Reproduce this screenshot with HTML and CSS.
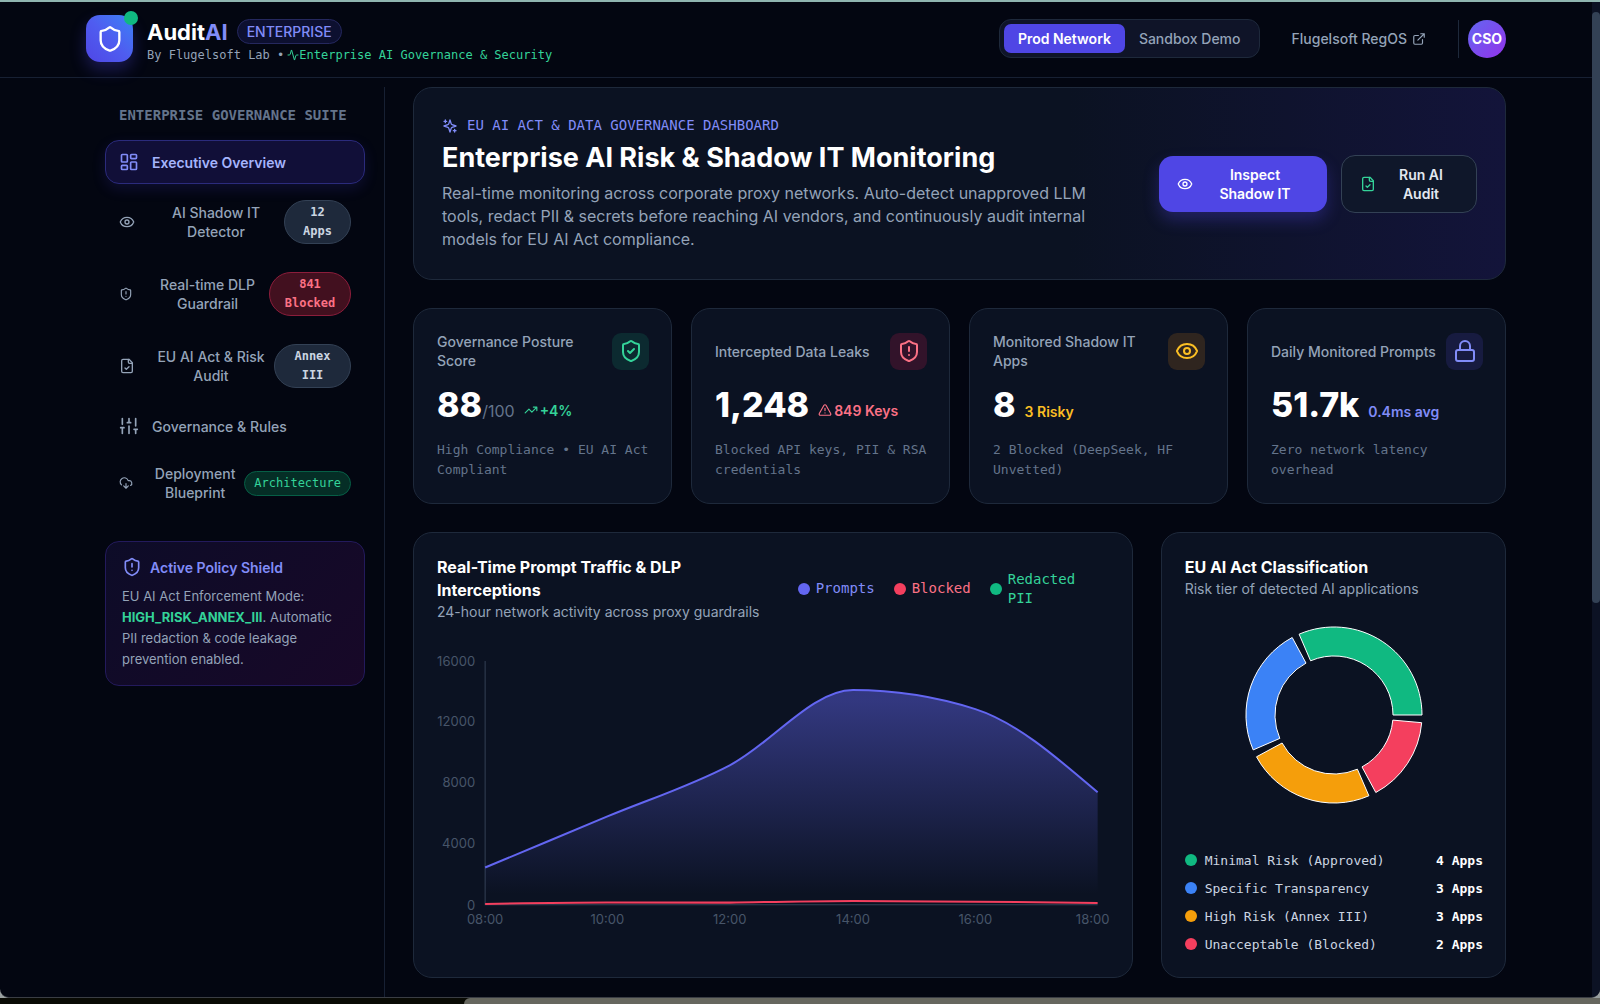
FILE: index.html
```html
<!DOCTYPE html>
<html lang="en">
<head>
<meta charset="utf-8">
<meta name="viewport" content="width=device-width, initial-scale=1">
<title>AuditAI Enterprise</title>
<link rel="stylesheet" href="styles.css">
</head>
<body>
<svg class="sprite" aria-hidden="true">
  <symbol id="shield" viewBox="0 0 24 24"><path d="M20 13c0 5-3.5 7.5-7.66 8.95a1 1 0 0 1-.67-.01C7.5 20.5 4 18 4 13V6a1 1 0 0 1 1-1c2 0 4.5-1.2 6.24-2.72a1.17 1.17 0 0 1 1.52 0C14.51 3.81 17 5 19 5a1 1 0 0 1 1 1z"/></symbol>
  <symbol id="shield-alert" viewBox="0 0 24 24"><path d="M20 13c0 5-3.5 7.5-7.66 8.95a1 1 0 0 1-.67-.01C7.5 20.5 4 18 4 13V6a1 1 0 0 1 1-1c2 0 4.5-1.2 6.24-2.72a1.17 1.17 0 0 1 1.52 0C14.51 3.81 17 5 19 5a1 1 0 0 1 1 1z"/><path d="M12 8v4M12 16h.01"/></symbol>
  <symbol id="shield-check" viewBox="0 0 24 24"><path d="M20 13c0 5-3.5 7.5-7.66 8.95a1 1 0 0 1-.67-.01C7.5 20.5 4 18 4 13V6a1 1 0 0 1 1-1c2 0 4.5-1.2 6.24-2.72a1.17 1.17 0 0 1 1.52 0C14.51 3.81 17 5 19 5a1 1 0 0 1 1 1z"/><path d="m9 12 2 2 4-4"/></symbol>
  <symbol id="activity" viewBox="0 0 24 24"><path d="M22 12h-2.48a2 2 0 0 0-1.93 1.46l-2.35 8.36a.25.25 0 0 1-.48 0L9.24 2.18a.25.25 0 0 0-.48 0l-2.35 8.36A2 2 0 0 1 4.49 12H2"/></symbol>
  <symbol id="external" viewBox="0 0 24 24"><path d="M15 3h6v6M10 14 21 3M18 13v6a2 2 0 0 1-2 2H5a2 2 0 0 1-2-2V8a2 2 0 0 1 2-2h6"/></symbol>
  <symbol id="dashboard" viewBox="0 0 24 24"><rect width="7" height="9" x="3" y="3" rx="1"/><rect width="7" height="5" x="14" y="3" rx="1"/><rect width="7" height="9" x="14" y="12" rx="1"/><rect width="7" height="5" x="3" y="16" rx="1"/></symbol>
  <symbol id="eye" viewBox="0 0 24 24"><path d="M2.062 12.348a1 1 0 0 1 0-.696 10.75 10.75 0 0 1 19.876 0 1 1 0 0 1 0 .696 10.75 10.75 0 0 1-19.876 0"/><circle cx="12" cy="12" r="3"/></symbol>
  <symbol id="file-check" viewBox="0 0 24 24"><path d="M15 2H6a2 2 0 0 0-2 2v16a2 2 0 0 0 2 2h12a2 2 0 0 0 2-2V7Z"/><path d="M14 2v4a2 2 0 0 0 2 2h4M9 15l2 2 4-4"/></symbol>
  <symbol id="sliders" viewBox="0 0 24 24"><path d="M4 21v-7M4 10V3M12 21v-9M12 8V3M20 21v-5M20 12V3M2 14h4M10 8h4M18 16h4"/></symbol>
  <symbol id="cloud" viewBox="0 0 24 24"><path d="M12 13v8l-4-4M12 21l4-4M4.393 15.269A7 7 0 1 1 15.71 8h1.79a4.5 4.5 0 0 1 2.436 8.284"/></symbol>
  <symbol id="sparkles" viewBox="0 0 24 24"><path d="m12 3-1.912 5.813a2 2 0 0 1-1.275 1.275L3 12l5.813 1.912a2 2 0 0 1 1.275 1.275L12 21l1.912-5.813a2 2 0 0 1 1.275-1.275L21 12l-5.813-1.912a2 2 0 0 1-1.275-1.275L12 3ZM5 3v4M19 17v4M3 5h4M17 19h4"/></symbol>
  <symbol id="trend" viewBox="0 0 24 24"><path d="m22 7-8.500 8.500-5-5L2 17M16 7h6v6"/></symbol>
  <symbol id="alert" viewBox="0 0 24 24"><path d="m21.730 18-8-14a2 2 0 0 0-3.480 0l-8 14A2 2 0 0 0 4 21h16a2 2 0 0 0 1.730-3M12 9v4M12 17h.01"/></symbol>
  <symbol id="lock" viewBox="0 0 24 24"><rect width="18" height="11" x="3" y="11" rx="2"/><path d="M7 11V7a5 5 0 0 1 10 0v4"/></symbol>
</svg>

<div class="window">
  <div class="page">
    <header class="topbar">
      <div class="topbar-inner">
        <div class="brand">
          <div class="logo"><svg class="icon icon-28"><use href="#shield"/></svg><span class="logo-dot"></span></div>
          <div class="brand-text">
            <div class="brand-row"><span class="brand-name">Audit<span class="brand-ai">AI</span></span><span class="brand-badge">ENTERPRISE</span></div>
            <p class="brand-sub"><span>By Flugelsoft Lab •</span><span class="brand-tag"><svg class="icon icon-12"><use href="#activity"/></svg>Enterprise AI Governance &amp; Security</span></p>
          </div>
        </div>
        <div class="top-actions">
          <div class="toggle">
            <button class="toggle-btn toggle-on" type="button">Prod Network</button>
            <button class="toggle-btn" type="button">Sandbox Demo</button>
          </div>
          <a class="top-link" href="#">Flugelsoft RegOS <svg class="icon icon-14"><use href="#external"/></svg></a>
          <div class="user"><div class="avatar">CSO</div></div>
        </div>
      </div>
    </header>

    <div class="shell">
      <aside class="sidebar">
        <h2 class="side-title">ENTERPRISE GOVERNANCE SUITE</h2>
        <nav class="side-nav">
          <button class="nav-item nav-active" type="button"><svg class="icon icon-20"><use href="#dashboard"/></svg><span class="nav-text nav-left">Executive Overview</span></button>
          <button class="nav-item" type="button"><svg class="icon icon-16"><use href="#eye"/></svg><span class="nav-text">AI Shadow IT Detector</span><span class="pill">12<br>Apps</span></button>
          <button class="nav-item" type="button"><svg class="icon icon-14"><use href="#shield-alert"/></svg><span class="nav-text">Real-time DLP Guardrail</span><span class="pill pill-red">841<br>Blocked</span></button>
          <button class="nav-item" type="button"><svg class="icon icon-16"><use href="#file-check"/></svg><span class="nav-text">EU AI Act &amp; Risk Audit</span><span class="pill pill-wide">Annex<br>III</span></button>
          <button class="nav-item" type="button"><svg class="icon icon-20"><use href="#sliders"/></svg><span class="nav-text nav-left">Governance &amp; Rules</span></button>
          <button class="nav-item" type="button"><svg class="icon icon-14"><use href="#cloud"/></svg><span class="nav-text">Deployment Blueprint</span><span class="pill pill-green">Architecture</span></button>
        </nav>
        <section class="policy">
          <h3 class="policy-title"><svg class="icon icon-20"><use href="#shield-alert"/></svg>Active Policy Shield</h3>
          <p class="policy-text">EU AI Act Enforcement Mode: <strong class="policy-mode">HIGH_RISK_ANNEX_III</strong>. Automatic PII redaction &amp; code leakage prevention enabled.</p>
        </section>
      </aside>

      <main class="main">
        <section class="hero">
          <div class="hero-copy">
            <p class="hero-label"><svg class="icon icon-16"><use href="#sparkles"/></svg>EU AI ACT &amp; DATA GOVERNANCE DASHBOARD</p>
            <h1 class="hero-title">Enterprise AI Risk &amp; Shadow IT Monitoring</h1>
            <p class="hero-text">Real-time monitoring across corporate proxy networks. Auto-detect unapproved LLM tools, redact PII &amp; secrets before reaching AI vendors, and continuously audit internal models for EU AI Act compliance.</p>
          </div>
          <div class="hero-actions">
            <button class="btn btn-primary" type="button"><svg class="icon icon-16"><use href="#eye"/></svg><span class="btn-text">Inspect<br>Shadow IT</span></button>
            <button class="btn btn-dark" type="button"><svg class="icon icon-16 green"><use href="#file-check"/></svg><span class="btn-text">Run AI<br>Audit</span></button>
          </div>
        </section>

        <section class="stats">
          <article class="card">
            <div class="stat-head"><h3 class="stat-label">Governance Posture Score</h3><span class="tile tile-green"><svg class="icon icon-24"><use href="#shield-check"/></svg></span></div>
            <div class="stat-row"><div class="stat-value">88<span class="stat-unit">/100</span></div><span class="stat-note green"><svg class="icon icon-14"><use href="#trend"/></svg>+4%</span></div>
            <p class="stat-caption">High Compliance • EU AI Act Compliant</p>
          </article>
          <article class="card">
            <div class="stat-head"><h3 class="stat-label">Intercepted Data Leaks</h3><span class="tile tile-red"><svg class="icon icon-24"><use href="#shield-alert"/></svg></span></div>
            <div class="stat-row"><div class="stat-value">1,248</div><span class="stat-note red"><svg class="icon icon-14"><use href="#alert"/></svg>849 Keys</span></div>
            <p class="stat-caption">Blocked API keys, PII &amp; RSA credentials</p>
          </article>
          <article class="card">
            <div class="stat-head"><h3 class="stat-label">Monitored Shadow IT Apps</h3><span class="tile tile-amber"><svg class="icon icon-24"><use href="#eye"/></svg></span></div>
            <div class="stat-row"><div class="stat-value">8</div><span class="stat-note amber">3 Risky</span></div>
            <p class="stat-caption">2 Blocked (DeepSeek, HF Unvetted)</p>
          </article>
          <article class="card">
            <div class="stat-head"><h3 class="stat-label">Daily Monitored Prompts</h3><span class="tile tile-indigo"><svg class="icon icon-24"><use href="#lock"/></svg></span></div>
            <div class="stat-row"><div class="stat-value">51.7k</div><span class="stat-note indigo">0.4ms avg</span></div>
            <p class="stat-caption">Zero network latency overhead</p>
          </article>
        </section>

        <section class="charts">
          <article class="card traffic">
            <div class="chart-head">
              <div>
                <h3 class="card-title">Real-Time Prompt Traffic &amp; DLP Interceptions</h3>
                <p class="card-sub">24-hour network activity across proxy guardrails</p>
              </div>
              <ul class="legend">
                <li class="legend-item indigo"><span class="dot dot-indigo"></span>Prompts</li>
                <li class="legend-item red"><span class="dot dot-red"></span>Blocked</li>
                <li class="legend-item green"><span class="dot dot-green"></span><span>Redacted<br>PII</span></li>
              </ul>
            </div>
            <svg class="area-chart" viewBox="0 0 671 304" role="img" aria-label="Prompt traffic by hour">
              <defs><linearGradient id="fill" x1="0" y1="0" x2="0" y2="1"><stop offset="5%" stop-color="#6366f1" stop-opacity=".45"/><stop offset="95%" stop-color="#6366f1" stop-opacity="0"/></linearGradient></defs>
              <path class="axis" d="M48 12V255H659"/>
              <path fill="url(#fill)" d="M48 218C89 201 129 184 170 167S252 137 292 116C333 95 374 41 415 41C455 41 496 47 537 60C578 73 618 108 659 143V255H48Z"/>
              <path class="line line-indigo" d="M48 218C89 201 129 184 170 167S252 137 292 116C333 95 374 41 415 41C455 41 496 47 537 60C578 73 618 108 659 143"/>
              <path class="line line-red" d="M48 254.300C89 253.500 129 252.800 170 252.800S252 253.200 292 253C333 252.500 374 251.300 415 251.300S618 252.600 659 253.300"/>
              <g class="tick tick-y"><text x="38" y="17">16000</text><text x="38" y="77">12000</text><text x="38" y="138">8000</text><text x="38" y="199">4000</text><text x="38" y="260">0</text></g>
              <g class="tick tick-x"><text x="48" y="274">08:00</text><text x="170" y="274">10:00</text><text x="292" y="274">12:00</text><text x="415" y="274">14:00</text><text x="537" y="274">16:00</text><text x="654" y="274">18:00</text></g>
            </svg>
          </article>

          <article class="card classes">
            <h3 class="card-title">EU AI Act Classification</h3>
            <p class="card-sub">Risk tier of detected AI applications</p>
            <div class="donut-wrap">
              <svg class="donut" viewBox="-89 -89 178 178" role="img" aria-label="Risk tiers">
                <path fill="#10b981" d="M88 0A88 88 0 0 0-34.900-80.800L-23.400-54.200A59 59 0 0 1 59 0Z"/>
                <path fill="#3b82f6" d="M-41.800-77.500A88 88 0 0 0-80.800 34.900L-54.200 23.400A59 59 0 0 1-28-51.900Z"/>
                <path fill="#f59e0b" d="M-77.500 41.800A88 88 0 0 0 34.900 80.800L23.400 54.200A59 59 0 0 1-51.900 28Z"/>
                <path fill="#f43f5e" d="M41.800 77.500A88 88 0 0 0 87.700 7.700L58.800 5.100A59 59 0 0 1 28 51.900Z"/>
              </svg>
            </div>
            <ul class="tiers">
              <li class="tier"><span class="dot dot-green"></span>Minimal Risk (Approved)<strong class="tier-count">4 Apps</strong></li>
              <li class="tier"><span class="dot dot-blue"></span>Specific Transparency<strong class="tier-count">3 Apps</strong></li>
              <li class="tier"><span class="dot dot-amber"></span>High Risk (Annex III)<strong class="tier-count">3 Apps</strong></li>
              <li class="tier"><span class="dot dot-red"></span>Unacceptable (Blocked)<strong class="tier-count">2 Apps</strong></li>
            </ul>
          </article>
        </section>
      </main>
    </div>
  </div>
  <div class="scrollbar"><div class="scroll-thumb"></div></div>
</div>
<div class="desktop"><div class="dock"></div></div>
</body>
</html>
```
FILE: styles.css
```css
* { box-sizing: border-box; margin: 0; padding: 0; }

body {
  display: flex;
  flex-direction: column;
  height: 100vh;
  overflow: hidden;
  background: #9aa0a0;
  color: #fff;
  font-family: Inter, "Liberation Sans", sans-serif;
  font-size: 14px;
  line-height: 19px;
}

button { font: inherit; color: inherit; background: none; border: 0; cursor: pointer; }
a { color: inherit; text-decoration: none; }
ul { list-style: none; }

.sprite { display: none; }
.icon { flex: none; fill: none; stroke: currentColor; stroke-width: 2; stroke-linecap: round; stroke-linejoin: round; }
.icon-12 { width: 12px; height: 12px; }
.icon-14 { width: 14px; height: 14px; }
.icon-16 { width: 16px; height: 16px; }
.icon-20 { width: 20px; height: 20px; }
.icon-24 { width: 24px; height: 24px; }
.icon-28 { width: 28px; height: 28px; }

.green { color: #34d399; }
.red { color: #fb7185; }
.amber { color: #fbbf24; }
.indigo { color: #818cf8; }

.window {
  flex: 1;
  min-height: 0;
  display: flex;
  overflow: hidden;
  border-top: 2px solid #8fb5b0;
  border-bottom: 1px solid #3a3d44;
  border-radius: 0 0 9px 9px;
  background: #030611;
}
.page { flex: 1; min-width: 0; }
.scrollbar { width: 8px; padding-top: 10px; background: #0c1224; }
.scroll-thumb { height: 60%; border-radius: 4px; background: #334155; }

.desktop { height: 6px; padding-left: 29%; background: #090a04; }
.dock { height: 6px; border-radius: 9px 0 0 0; background: #66675f; }

/* Top bar */
.topbar { border-bottom: 1px solid #172033; }
.topbar-inner {
  display: flex;
  align-items: center;
  justify-content: space-between;
  max-width: 1420px;
  height: 75px;
  margin: 0 auto;
  padding-bottom: 2px;
}
.brand { display: flex; align-items: center; gap: 14px; }
.brand-text { padding-top: 5px; }
.logo {
  position: relative;
  display: grid;
  place-items: center;
  width: 47px;
  height: 47px;
  border-radius: 14px;
  background: linear-gradient(45deg, #4f46e5, #4f5df0 50%, #3b82f6);
  box-shadow: 0 8px 16px rgba(79, 70, 229, .3);
}
.logo-dot { position: absolute; top: -4px; right: -5px; width: 14px; height: 14px; border-radius: 50%; background: #10b981; }
.brand-row { display: flex; align-items: center; gap: 9px; }
.brand-name { font-size: 22px; line-height: 28px; font-weight: 700; }
.brand-ai { color: #818cf8; }
.brand-badge {
  padding: 2px 9px;
  border: 1px solid #25285e;
  border-radius: 14px;
  background: #0d1030;
  color: #818cf8;
  font-weight: 500;
}
.brand-sub, .hero-label, .side-title, .pill, .stat-caption, .legend, .tiers {
  font-family: "DejaVu Sans Mono", "Liberation Mono", monospace;
}
.brand-sub { display: flex; align-items: center; gap: 3px; color: #94a3b8; font-size: 12px; }
.brand-tag { display: flex; align-items: center; color: #34d399; }

.top-actions { display: flex; align-items: center; font-weight: 500; color: #94a3b8; }
.toggle { display: flex; padding: 4px; border: 1px solid #1e293b; border-radius: 12px; background: #0f1428; }
.toggle-btn { padding: 5px 14px; border-radius: 7px; }
.toggle-on { background: #4f46e5; color: #fff; font-weight: 600; }
.top-link { display: flex; align-items: center; gap: 5px; margin: 0 32px; }
.user { padding-left: 9px; border-left: 1px solid #1e293b; }
.avatar {
  display: grid;
  place-items: center;
  width: 38px;
  height: 38px;
  border-radius: 50%;
  background: linear-gradient(135deg, #6366f1, #9333ea);
  color: #fff;
  font-weight: 700;
}

/* Layout below the top bar */
.shell { display: flex; max-width: 1420px; margin: 0 auto; padding-top: 9px; }
.sidebar { flex: none; width: 299px; min-height: 100vh; padding: 19px 19px 0; border-right: 1px solid #172033; }
.main { flex: 1; min-width: 0; padding-left: 28px; }

.side-title { padding: 0 14px; color: #64748b; font-size: 14px; font-weight: 700; white-space: nowrap; }
.side-nav { display: flex; flex-direction: column; gap: 4px; margin: 15px 0 27px; }
.nav-item {
  display: flex;
  align-items: center;
  min-height: 44px;
  padding: 11px 13px;
  border: 1px solid transparent;
  border-radius: 14px;
  color: #94a3b8;
  font-weight: 500;
}
.nav-text { flex: 1; padding-left: 13px; }
.nav-left { text-align: left; }
.nav-active { border-color: #2b2b7c; background: #110f38; color: #a5b4fc; font-weight: 600; box-shadow: 0 5px 14px rgba(79, 70, 229, .15); }
.nav-active .icon { color: #818cf8; }
.pill {
  flex: none;
  min-width: 67px;
  padding: 2px 10px;
  border: 1px solid #334155;
  border-radius: 24px;
  background: #1e293b;
  color: #cbd5e1;
  font-size: 12px;
  font-weight: 700;
}
.pill-wide { min-width: 77px; }
.pill-red { min-width: 82px; border-color: #8c1d3b; background: #42101f; color: #fb7185; }
.pill-green { border-color: #065f46; background: #052e26; color: #34d399; font-weight: 400; padding: 2px 9px; }

.policy { padding: 15px 16px; border: 1px solid #231a5c; border-radius: 14px; background: linear-gradient(135deg, #0d0c28, #180828); }
.policy-title { display: flex; align-items: center; gap: 8px; color: #818cf8; font-size: 14px; font-weight: 600; }
.policy-text { margin-top: 9px; color: #94a3b8; font-size: 13px; line-height: 21px; }
.policy-mode { color: #34d399; font-weight: 700; }

/* Hero */
.hero {
  display: flex;
  align-items: center;
  justify-content: space-between;
  padding: 28px;
  border: 1px solid #1e293b;
  border-radius: 19px;
  background: linear-gradient(90deg, #0b1222 60%, #13143a);
}
.hero-copy { max-width: 670px; }
.hero-label { display: flex; align-items: center; gap: 9px; color: #818cf8; }
.hero-title { margin: 5px 0 6px; font-size: 27px; line-height: 36px; font-weight: 700; white-space: nowrap; }
.hero-text { color: #94a3b8; font-size: 16px; line-height: 23px; }
.hero-actions { display: flex; align-items: center; gap: 14px; }
.btn { display: flex; align-items: center; gap: 8px; padding: 9px 18px; border-radius: 14px; font-weight: 600; }
.btn-text { flex: 1; }
.btn-primary { width: 168px; background: #4f46e5; box-shadow: 0 8px 16px rgba(79, 70, 229, .3); }
.btn-dark { width: 136px; border: 1px solid #334155; background: #0f172a; color: #e2e8f0; }

/* Stat cards */
.stats { display: grid; grid-template-columns: repeat(4, 1fr); gap: 19px; margin: 28px 0; }
.card { padding: 23px 22px 23px 23px; border: 1px solid #1e293b; border-radius: 19px; background: #0b1222; }
.stat-head { display: flex; align-items: center; justify-content: space-between; min-height: 38px; }
.stat-label { color: #94a3b8; font-size: 14px; font-weight: 500; }
.tile { flex: none; display: grid; place-items: center; width: 37px; height: 37px; border-radius: 9px; }
.tile-green { background: #0c2a30; color: #34d399; }
.tile-red { background: #32132a; color: #fb7185; }
.tile-amber { background: #2f251f; color: #fbbf24; }
.tile-indigo { background: #171b40; color: #818cf8; }
.stat-row { display: flex; align-items: baseline; gap: 9px; margin: 14px 0; }
.stat-value { font-size: 34px; line-height: 42px; font-weight: 800; }
.stat-unit { color: #64748b; font-size: 16px; line-height: 16px; font-weight: 400; }
.stat-note { display: flex; align-items: center; gap: 2px; font-weight: 600; }
.stat-caption { color: #64748b; font-size: 13px; line-height: 20px; }

/* Charts */
.charts { display: grid; grid-template-columns: 719fr 345fr; gap: 28px; }
.card-title { font-size: 16px; line-height: 23px; font-weight: 700; }
.card-sub { color: #94a3b8; }
.chart-head { display: flex; align-items: center; justify-content: space-between; gap: 19px; }
.legend { flex: none; display: flex; align-items: center; gap: 19px; width: 312px; }
.legend-item { display: flex; align-items: center; gap: 6px; }
.dot { flex: none; width: 12px; height: 12px; border-radius: 50%; }
.dot-indigo { background: #6366f1; }
.dot-red { background: #f43f5e; }
.dot-green { background: #10b981; }
.dot-blue { background: #3b82f6; }
.dot-amber { background: #f59e0b; }
.area-chart { display: block; width: 100%; margin-top: 28px; }
.axis { fill: none; stroke: #334155; stroke-width: 1; }
.line { fill: none; stroke-width: 2; }
.line-indigo { stroke: #6366f1; }
.line-red { stroke: #f43f5e; }
.tick { fill: #475569; font-size: 13px; }
.tick-y { text-anchor: end; }
.tick-x { text-anchor: middle; }

.classes { display: flex; flex-direction: column; }
.donut-wrap { flex: 1; display: grid; place-items: center; margin-bottom: 19px; }
.donut { width: 178px; height: 178px; stroke: #fff; stroke-width: 1; }
.tiers { display: flex; flex-direction: column; gap: 9px; color: #cbd5e1; font-size: 13px; }
.tier { display: flex; align-items: center; gap: 8px; }
.tier-count { margin-left: auto; color: #fff; }
```
